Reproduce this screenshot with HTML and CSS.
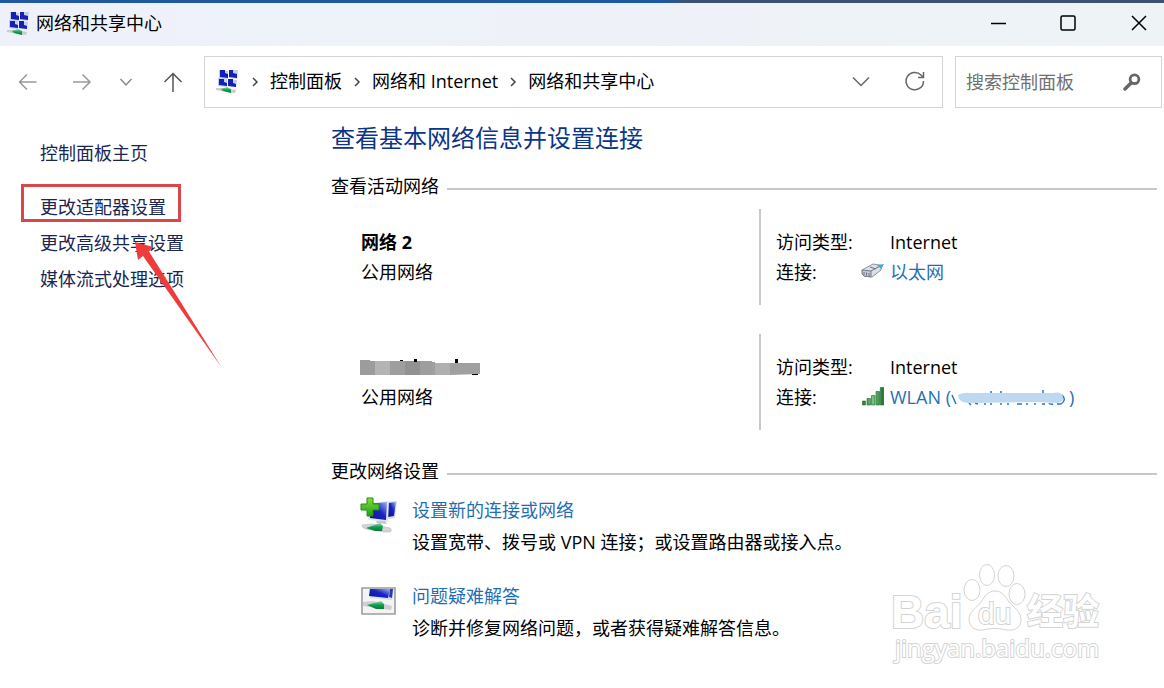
FILE: index.html
```html
<!DOCTYPE html>
<html lang="zh-CN">
<head>
<meta charset="utf-8">
<title>网络和共享中心</title>
<link rel="stylesheet" href="styles.css">
</head>
<body>
<svg class="defs" aria-hidden="true">
  <defs>
    <linearGradient id="screen" x1="0" y1="1" x2="1" y2="0">
      <stop offset="0" stop-color="#0d0f86"/><stop offset=".55" stop-color="#1a26c4"/><stop offset="1" stop-color="#9fb4f2"/>
    </linearGradient>
    <linearGradient id="plus" x1="0" y1="0" x2="0" y2="1">
      <stop offset="0" stop-color="#7ee03c"/><stop offset="1" stop-color="#1fa010"/>
    </linearGradient>
    <linearGradient id="cable" x1="0" y1="0" x2="0" y2="1">
      <stop offset="0" stop-color="#8fdcae"/><stop offset=".5" stop-color="#0f9f4c"/><stop offset="1" stop-color="#0a7a38"/>
    </linearGradient>
    <linearGradient id="bar" x1="0" y1="0" x2="1" y2="0">
      <stop offset="0" stop-color="#2b7a38"/><stop offset=".5" stop-color="#7cc283"/><stop offset="1" stop-color="#1f6b2c"/>
    </linearGradient>
    <symbol id="network" viewBox="0 0 24 24">
      <path d="M3 1l9 1v8l-9-1zM13 1h9l-1 9-8-1zM2 9l9 1v8l-9-1zM12 10l9 1-1 7-8-1z" fill="#c3cdf3"/>
      <path d="M4 1h5v3l3 1v4l-8-1zM13 1h4v3l4 1v4l-8-1zM3 10h5v3l3 1v3l-8-1zM12 10h5v4l3 1v3l-8-1z" fill="#1620b4"/>
      <path d="M0 19l8 0 12 2-1 3-8-1-11-2z" fill="#c6cccf"/>
      <path d="M5 20l6-2 4 2v4l-8-2z" fill="url(#cable)"/>
    </symbol>
  </defs>
</svg>

<header class="titlebar">
  <svg class="app-icon"><use href="#network"/></svg>
  <span class="window-title">网络和共享中心</span>
  <div class="window-buttons">
    <button type="button" aria-label="最小化"><svg width="16" height="16" viewBox="0 0 16 16"><path d="M1 8.500h15"/></svg></button>
    <button type="button" aria-label="最大化"><svg width="16" height="16" viewBox="0 0 16 16"><rect x="1" y="1" width="14" height="14" rx="1.500"/></svg></button>
    <button type="button" aria-label="关闭"><svg width="16" height="16" viewBox="0 0 16 16"><path d="M1 1l14 14M15 1L1 15"/></svg></button>
  </div>
</header>

<nav class="toolbar" aria-label="导航">
  <div class="history">
    <button type="button" class="faded" aria-label="后退"><svg width="20" height="20" viewBox="0 0 20 20"><path d="M18.500 10H2M9 2.500L1.500 10 9 17.500"/></svg></button>
    <button type="button" class="faded" aria-label="前进"><svg width="20" height="20" viewBox="0 0 20 20"><path d="M1 10h16.500M10.500 2.500L18 10l-7.500 7.500"/></svg></button>
    <button type="button" class="recent" aria-label="最近位置"><svg width="20" height="20" viewBox="0 0 20 20"><path d="M4.500 7l5.500 6 5.500-6"/></svg></button>
    <button type="button" class="up" aria-label="向上"><svg width="20" height="20" viewBox="0 0 20 20"><path d="M10 20V1.500M1.500 10L10 1.500l8.500 8.500"/></svg></button>
  </div>
  <div class="address">
    <svg class="app-icon"><use href="#network"/></svg>
    <svg class="sep" viewBox="0 0 8 10"><path d="M2 1l4 4-4 4"/></svg>
    <a href="#">控制面板</a>
    <svg class="sep" viewBox="0 0 8 10"><path d="M2 1l4 4-4 4"/></svg>
    <a href="#">网络和 Internet</a>
    <svg class="sep" viewBox="0 0 8 10"><path d="M2 1l4 4-4 4"/></svg>
    <a href="#">网络和共享中心</a>
    <div class="address-actions">
      <button type="button" aria-label="展开"><svg width="20" height="20" viewBox="0 0 20 20"><path d="M2 6.500l8 8 8-8"/></svg></button>
      <button type="button" aria-label="刷新"><svg width="20" height="20" viewBox="0 0 20 20"><path d="M18.500 10A8.700 8.700 0 1 1 16 4l2.500 2.500M18.500 1v5.500H13"/></svg></button>
    </div>
  </div>
  <form class="search">
    <input type="search" aria-label="搜索控制面板" placeholder="搜索控制面板">
    <button type="button" aria-label="搜索"><svg width="18" height="18" viewBox="0 0 18 18"><circle cx="11.500" cy="6.300" r="4.400" stroke-width="2.800"/><path d="M8 10l-6 6" stroke-width="3.400" stroke-linecap="round"/></svg></button>
  </form>
</nav>

<div class="body">
  <aside class="sidebar">
    <a class="home" href="#">控制面板主页</a>
    <a class="marked" href="#">更改适配器设置</a>
    <a href="#">更改高级共享设置</a>
    <a href="#">媒体流式处理选项</a>
    <svg class="arrow" width="90" height="128" viewBox="0 0 90 128"><path d="M1 1l18 5-4 4.500L88 127 9 15l-5 4z" fill="#ee3b3b"/></svg>
  </aside>

  <main class="content">
    <h1>查看基本网络信息并设置连接</h1>

    <section>
      <h2>查看活动网络</h2>
      <div class="networks">
        <article class="network">
          <div>
            <h3>网络 2</h3>
            <p>公用网络</p>
          </div>
          <dl>
            <dt>访问类型:</dt><dd>Internet</dd>
            <dt>连接:</dt>
            <dd class="link"><svg width="24" height="20" viewBox="0 0 24 20">
              <path d="M2 8L13 2l6 1 3 1-1 4-9 7-8-1z" fill="#dce0e6" stroke="#8c93a0"/>
              <path d="M2 8l9 1v6l-7-1-2-2z" fill="#c4c9d2" stroke="#777d8a"/>
              <path d="M4 10l0 3M6.500 10.500v3M9 11v3M11 9l9-5M10 5l6 2" stroke="#6b7280" fill="none"/>
              <path d="M17 3l7-1-3 5z" fill="#43a8d8"/>
            </svg><a href="#">以太网</a></dd>
          </dl>
        </article>
        <article class="network">
          <div>
            <h3><svg class="hidden-name" width="122" height="20" viewBox="0 0 122 20">
              <path d="M0 5h10v1h15v14H0z" fill="#9c9c9c"/><path d="M15 6h15v14H15z" fill="#b4b4b4"/><path d="M30 6h42v14H30z" fill="#9e9e9e"/>
              <path d="M45 6h15v14H45z" fill="#929292"/><path d="M72 7h3v1h45v11l-30 1H72z" fill="#a0a0a0"/><path d="M75 8h15v12H75z" fill="#b0b0b0"/>
              <path d="M40 5h3v1h-3zM54 4h3v3h-3zM95 4h3v4h-3zM112 19h6v1h-6z" fill="#000"/>
            </svg></h3>
            <p>公用网络</p>
          </div>
          <dl>
            <dt>访问类型:</dt><dd>Internet</dd>
            <dt>连接:</dt>
            <dd class="link"><svg width="24" height="20" viewBox="0 0 24 20" stroke="#1d6a2b" stroke-width=".6" fill="url(#bar)">
              <path d="M2.500 14h3v4h-3zM7 11.500h3.500V18H7zM11.500 8.500H15V18h-3.500zM16 4.500h3.500V18H16zM20.300.5h3.500V18h-3.500z"/>
            </svg><a href="#">WLAN (<svg class="smudge" width="118" height="20" viewBox="0 0 118 20">
              <path d="M1 6l4 9M18 14l2 2M24 14l3 1M34 14v2M40 14v2M40 2v2M50 2v3M50 14v2M57 14v2M66 15h5M76 14v2M84 14v2M92 1v4M91 15h3M98 14q1 2 4 1M106 15h4M111 6q5 5-1 9" fill="none" stroke="#2a78bd" stroke-width="1.500"/>
              <path d="M7 6q5-3 12-2h83q10-2 10 5 1 3-5 5l-20-1-70 1q-10-1-10-8z" fill="#bfd8f2"/>
            </svg>)</a></dd>
          </dl>
        </article>
      </div>
    </section>

    <section>
      <h2>更改网络设置</h2>
      <ul class="tasks">
        <li>
          <svg class="task-icon" width="38" height="38" viewBox="0 0 38 38">
            <path d="M22 5l15-1-2 17-10 2z" fill="#d9dde8"/><path d="M28 6l8-1-2 14-6 1z" fill="url(#screen)"/>
            <path d="M8 6l21-2-1 21-20-2z" fill="#e3e6ef"/><path d="M9 7l18-2-1 18-16-2z" fill="url(#screen)"/>
            <path d="M16 24l9 0 2 3-10-1z" fill="#c3c8d2"/>
            <path d="M2 28l10-1 18 4q3 2 0 4l-6 0-18-3q-4-1-4-4z" fill="#d1d6d8" stroke="#aab0b2" stroke-width=".5"/>
            <path d="M6 31l14-5 3 3-1 5-7 0z" fill="url(#cable)"/>
            <path d="M7 1h6v6h6v6h-6v6H7v-6H1V7h6z" fill="url(#plus)" stroke="#238c17"/>
          </svg>
          <div>
            <a href="#">设置新的连接或网络</a>
            <p>设置宽带、拨号或 VPN 连接；或设置路由器或接入点。</p>
          </div>
        </li>
        <li>
          <svg class="task-icon" width="38" height="38" viewBox="0 0 38 38">
            <path d="M2 5h33v26H2z" fill="#f4f4f4" stroke="#9a9da0" stroke-width="1.600"/>
            <path d="M9 6h25l-2 11-22-2z" fill="#d8dce6"/><path d="M10 6h20l-2 9-19-2z" fill="url(#screen)"/><path d="M30 6h3l-1 9-3-1z" fill="#2638be"/>
            <path d="M3 19l10-1 19 5-1 4-14-2-14-2z" fill="#c9cfd2"/>
            <path d="M7 22l14-4 3 3v5l-8 0z" fill="url(#cable)"/>
          </svg>
          <div>
            <a href="#">问题疑难解答</a>
            <p>诊断并修复网络问题，或者获得疑难解答信息。</p>
          </div>
        </li>
      </ul>
    </section>
  </main>
</div>

<svg class="watermark" width="216" height="110" viewBox="0 0 216 110">
  <text class="wm-brand" x="3" y="72">Bai</text>
  <ellipse cx="84" cy="34" rx="8" ry="10.500"/><ellipse cx="99" cy="19" rx="7.500" ry="10.500"/>
  <ellipse cx="118" cy="20" rx="8" ry="10.500"/><ellipse cx="129" cy="38" rx="8" ry="10.500"/>
  <path d="M107 35c7 0 10 5 14 11 4 5 12 9 12 18 0 8-7 11-14 10-9-2-16-2-24 0-8 1-14-3-14-11s8-11 12-17 7-11 14-11z"/>
  <text class="wm-du" x="90" y="68">du</text>
  <text class="wm-cn" x="139" y="69">经验</text>
  <text class="wm-url" x="7" y="101">jingyan.baidu.com</text>
</svg>
</body>
</html>
```
FILE: styles.css
```css
* { box-sizing: border-box; }

body {
  margin: 0;
  min-height: 100vh;
  position: relative;
  background: #fff;
  color: #000;
  font: 18px/30px "Open Sans", "Noto Sans CJK SC", sans-serif;
}

h1, h2, h3, p, dl, dd, ul { margin: 0; padding: 0; }
a { color: inherit; text-decoration: none; }
svg { display: block; flex: none; }
.defs { position: absolute; width: 0; height: 0; }

button {
  display: flex;
  align-items: center;
  justify-content: center;
  padding: 0;
  border: 0;
  background: none;
  color: inherit;
}

button svg, .sep { fill: none; stroke: currentColor; stroke-width: 1.500; }

.titlebar {
  display: flex;
  align-items: center;
  height: 46px;
  padding: 0 0 4px 7px;
  border-top: 3px solid #2c5690;
  border-image: linear-gradient(90deg, #1f58a0 0 57%, #3d5270 59%) 3;
  background: linear-gradient(90deg, #eef1fa, #eef3f6);
}

.app-icon { width: 24px; height: 24px; }
.window-title { margin-left: 5px; }
.window-buttons { display: flex; margin-left: auto; }
.window-buttons button { width: 70px; height: 39px; }
.window-buttons button:last-child { width: 50px; margin-left: 11px; }

.toolbar {
  display: flex;
  gap: 12px;
  padding: 10px 2px 12px 0;
}

.history { display: flex; align-items: center; width: 192px; color: #555; }
.history button { flex: none; width: 52px; height: 52px; }
.history .faded { color: #999; }
.history .faded:first-child { width: 56px; }
.history .recent { width: 36px; color: #888; }
.history .up { width: 58px; }

.address {
  flex: 1;
  display: flex;
  align-items: center;
  height: 52px;
  padding: 0 0 2px 11px;
  border: 1px solid #d2d4d6;
}

.sep { width: 8px; height: 10px; margin: 2px 11px 0; color: #444; }
.address-actions { display: flex; margin-left: auto; color: #666; }
.address-actions button { width: 54px; height: 48px; }

.search {
  display: flex;
  align-items: center;
  width: 207px;
  height: 52px;
  border: 1px solid #d2d4d6;
}

.search input {
  flex: 1;
  min-width: 0;
  height: 40px;
  padding: 0 0 0 10px;
  border: 0;
  outline: 0;
  background: none;
  font: inherit;
}

.search input::placeholder { color: #707070; opacity: 1; }
.search button { width: 58px; height: 50px; color: #666; }

.body {
  display: grid;
  grid-template-columns: 331px 1fr;
}

.sidebar {
  position: relative;
  display: flex;
  flex-direction: column;
  align-items: flex-start;
  padding: 15px 0 0 40px;
  color: #1a2650;
  line-height: 36px;
}

.home { margin-bottom: 18px; }
.marked { position: relative; }

.marked::after {
  content: "";
  position: absolute;
  inset: -5px -15px 3px -19px;
  border: 3px solid #d94748;
}

.arrow { position: absolute; left: 134px; top: 121px; }

.content { padding-right: 7px; }

h1 {
  color: #0b3588;
  font-size: 24px;
  font-weight: 400;
  line-height: 36px;
}

h2 {
  display: flex;
  align-items: center;
  gap: 8px;
  margin: 15px 0 8px;
  font-size: 18px;
  font-weight: 400;
}

h2::after { content: ""; flex: 1; height: 2px; margin-top: 6px; background: #c8c8c8; }
h3 { height: 30px; font-size: 18px; line-height: 30px; }

.networks { display: grid; gap: 29px; margin-bottom: 26px; }

.network {
  display: grid;
  grid-template-columns: 1fr 1fr;
  padding-left: 30px;
}

.network > div { padding: 18px 0; }
.hidden-name { margin: 3px 0 0 -1px; }
h3 { display: flow-root; }

.network dl {
  display: grid;
  grid-template-columns: 84px 1fr;
  padding: 18px 0 18px 15px;
  border-left: 2px solid #c8c8c8;
}

.network dd { padding-left: 30px; }
.network .link { display: flex; align-items: center; gap: 6px; padding-left: 0; }
.link a, .tasks a { color: #1f6fb5; }
.smudge { display: inline-block; vertical-align: middle; }

.tasks { display: grid; gap: 22px; padding-left: 29px; list-style: none; line-height: 32px; }
.tasks li { display: flex; gap: 14px; }
.task-icon { margin-top: 3px; }
.tasks a { display: block; }

.watermark {
  position: absolute;
  right: 60px;
  bottom: 22px;
  overflow: visible;
  fill: #fff;
  stroke: #d4d4d4;
  stroke-width: 1;
}

.watermark text { stroke-width: 2; paint-order: stroke; }
.wm-brand { font: bold 46px "Liberation Sans", sans-serif; }
.wm-du { font: 30px "Liberation Sans", sans-serif; }
.wm-cn { font: bold 36px "Noto Sans CJK SC", sans-serif; }
.wm-url { font: 24px "Open Sans", sans-serif; }
```
